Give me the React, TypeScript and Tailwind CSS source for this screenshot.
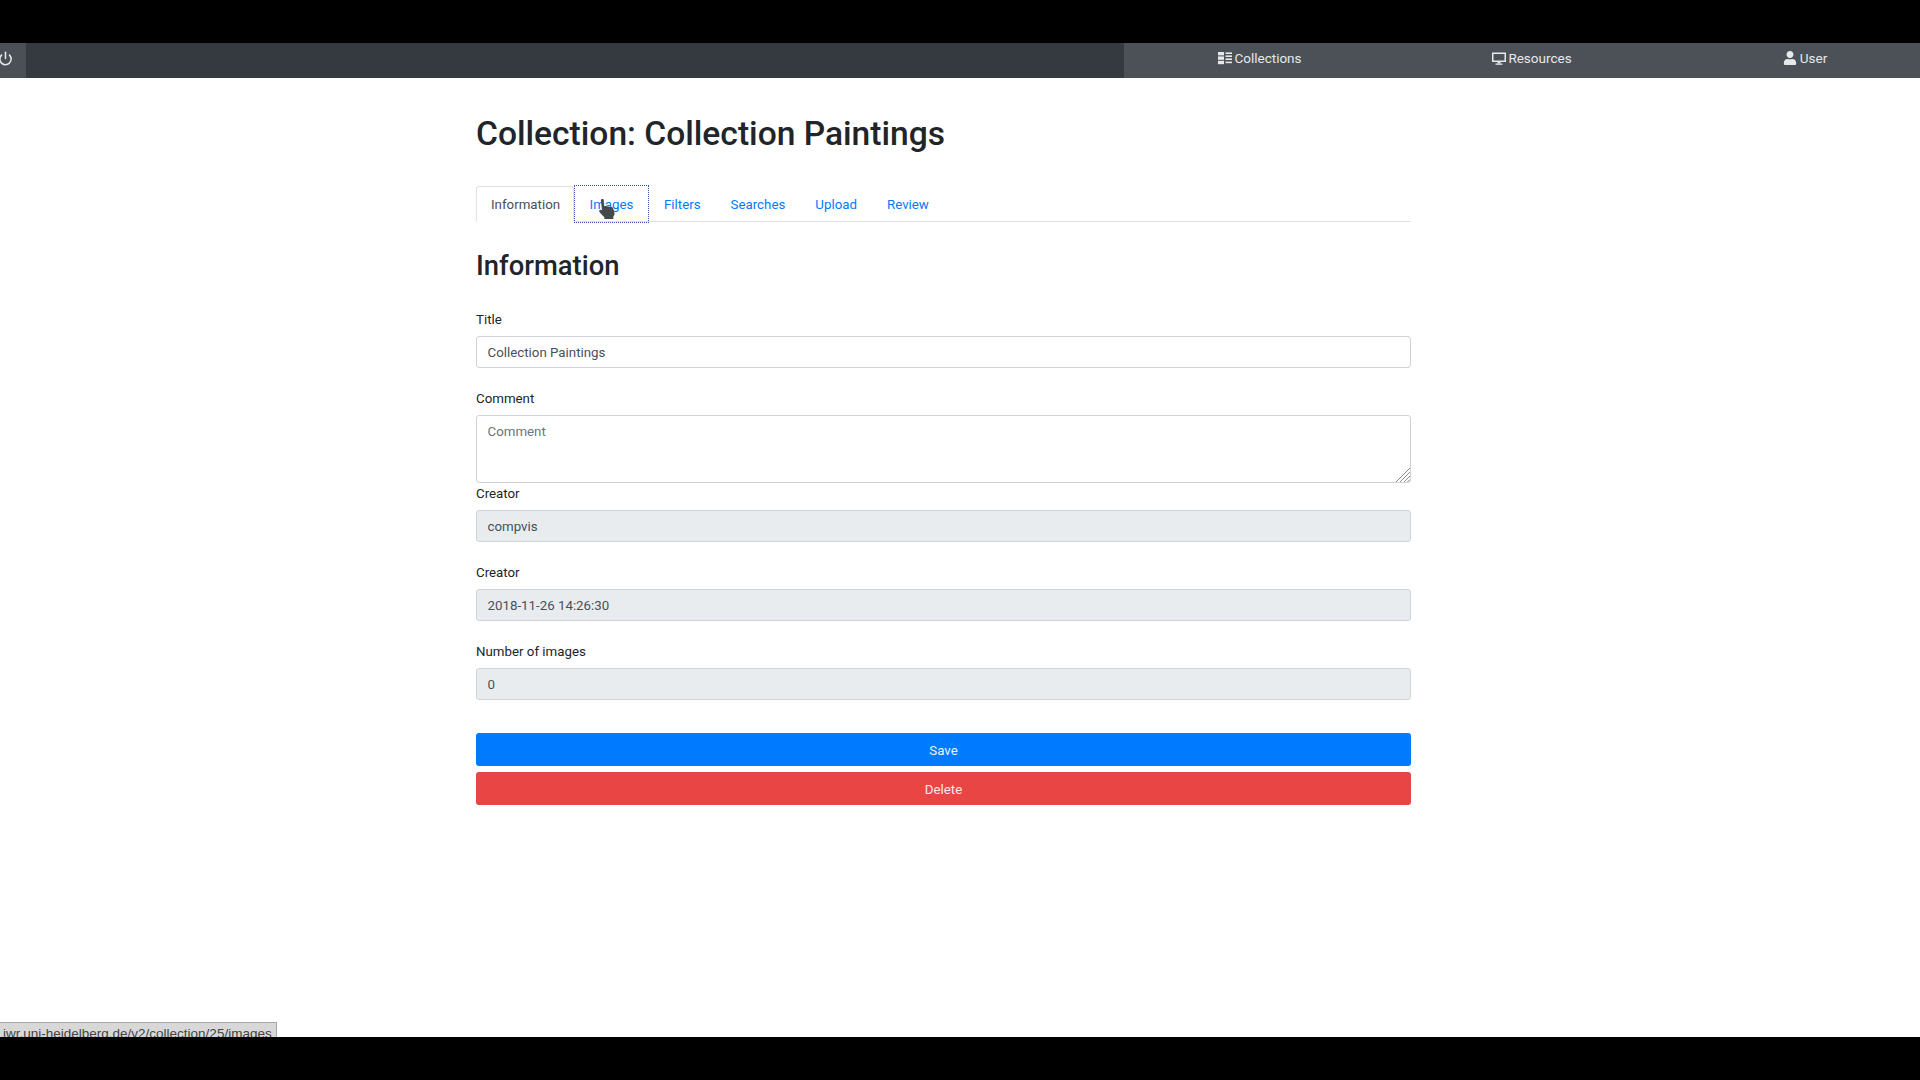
import { FaUser } from "react-icons/fa";
import { Power } from "lucide-react";

const tabs = ["Information", "Images", "Filters", "Searches", "Upload", "Review"];

function ListIcon() {
  return (
    <svg width="14" height="14" viewBox="0 0 14 14" fill="currentColor">
      <rect x="0" y="1" width="6" height="3.4" />
      <rect x="0" y="5.4" width="6" height="3.4" />
      <rect x="0" y="9.8" width="6" height="3.4" />
      <rect x="7.5" y="1.4" width="6.5" height="1.6" />
      <rect x="7.5" y="4.4" width="6.5" height="1.6" />
      <rect x="7.5" y="7.4" width="6.5" height="1.6" />
      <rect x="7.5" y="10.6" width="6.5" height="1.6" />
    </svg>
  );
}

function MonitorIcon() {
  return (
    <svg width="14" height="15" viewBox="0 0 14 14" fill="currentColor">
      <path fillRule="evenodd" d="M0 1h14v9.5H0zM1.5 2.4v6.7h11V2.4z" />
      <rect x="5.5" y="10.5" width="3" height="1.5" />
      <rect x="3.5" y="12" width="7" height="1.3" />
    </svg>
  );
}

function HandCursor() {
  return (
    <svg
      width="20"
      height="22"
      viewBox="0 0 18 24"
      preserveAspectRatio="none"
      className="absolute left-[22px] top-[12px]"
    >
      <path
        d="M3.5 2.2c0-1.5 2.6-1.5 2.6 0V9l1-.2c1-.2 1.8 0 2.2.6 1-.4 2-.2 2.5.5 1-.4 2.4 0 2.7 1.2l1.2 5c.3 1.4 0 3-1 4.2V23H6.6v-2c-1-1.4-2.4-3-4-5.2-1-1.4-.8-2.6.2-3 .6-.2 1.2 0 1.7.5z"
        fill="#45484c"
      />
    </svg>
  );
}

function ResizeGrip() {
  return (
    <svg
      width="14"
      height="14"
      viewBox="0 0 14 14"
      stroke="#8c8c8c"
      strokeWidth="1"
      className="absolute right-[1px] bottom-[1px]"
    >
      <path d="M0 14L14 0M4 14L14 4M8 14L14 8M11.5 14L14 11.5" />
    </svg>
  );
}

function Field({ label, value, disabled }: { label: string; value: string; disabled?: boolean }) {
  return (
    <div className="mb-[20px]">
      <label className="mb-[5px] block text-[13.3px] leading-[22px] text-[#212529]">{label}</label>
      <input
        readOnly
        value={value}
        className={`block h-[32px] w-full rounded-[3px] border border-[#ced4da] px-[10.5px] text-[13.3px] text-[#495057] outline-none ${
          disabled ? "bg-[#e9ecef]" : "bg-white"
        }`}
      />
    </div>
  );
}

export default function App() {
  return (
    <div className="relative flex h-screen flex-col overflow-hidden bg-white font-['Roboto',sans-serif]">
      <div className="h-[43px] shrink-0 bg-black" />

      {/* navbar */}
      <nav className="flex h-[35px] shrink-0 overflow-hidden bg-[#343a40] text-[13.5px] text-[#e6e8ea]">
        <div className="flex w-[26px] shrink-0 items-center bg-[#4a5056] pb-[5px]">
          <Power size={15} strokeWidth={2.4} className="-ml-[2px]" />
        </div>
        <div className="ml-[1098px] flex shrink-0 bg-[#4b5157]">
          <div className="flex w-[272px] items-center justify-center gap-[2px] pb-[5px]">
            <ListIcon />
            Collections
          </div>
          <div className="flex w-[272px] items-center justify-center gap-[2px] pb-[5px]">
            <MonitorIcon />
            Resources
          </div>
          <div className="flex w-[272px] items-center justify-center gap-[3px] pb-[5px] pl-[2px]">
            <FaUser size={14} />
            User
          </div>
        </div>
      </nav>

      <main className="min-h-0 flex-1">
        <div className="ml-[476px] w-[935px]">
          <h1 className="mt-[36px] text-[33.6px] leading-[40px] font-medium text-[#212529]">
            Collection: Collection Paintings
          </h1>

          <ul className="mt-[32px] flex h-[36px] border-b border-[#dee2e6] text-[13.3px]">
            {tabs.map((tab, i) => (
              <li
                key={tab}
                className={
                  i === 0
                    ? "h-[36px] rounded-t-[3px] border border-b-white border-[#dee2e6] bg-white pr-[13px] pl-[14px] leading-[36px] text-[#495057]"
                    : i === 1
                      ? "relative -mt-[1px] h-[38px] border border-dotted border-[#2a5db0] px-[14.5px] leading-[38px] text-[#007bff]"
                      : "h-[36px] px-[15px] leading-[38px] text-[#007bff]"
                }
              >
                {tab}
                {i === 1 && <HandCursor />}
              </li>
            ))}
          </ul>

          <h2 className="mt-[28px] mb-[27px] text-[27.4px] leading-[32px] font-medium text-[#212529]">
            Information
          </h2>

          <Field label="Title" value="Collection Paintings" />

          <div>
            <label className="mb-[5px] block text-[13.3px] leading-[22px] text-[#212529]">Comment</label>
            <div className="relative">
              <textarea
                readOnly
                placeholder="Comment"
                className="block h-[68px] w-full resize-none rounded-[3px] border border-[#ced4da] bg-white px-[10.5px] py-[6px] text-[13.3px] text-[#495057] outline-none placeholder:text-[#6c757d]"
              />
              <ResizeGrip />
            </div>
          </div>

          <Field label="Creator" value="compvis" disabled />
          <Field label="Creator" value="2018-11-26 14:26:30" disabled />
          <Field label="Number of images" value="0" disabled />

          <button className="mt-[33px] block h-[33px] w-full rounded-[3px] bg-[#007bff] pt-[2px] text-[13.3px] text-[#e8f2ff]">
            Save
          </button>
          <button className="mt-[6px] block h-[33px] w-full rounded-[3px] bg-[#e94545] pt-[2px] text-[13.3px] text-[#fde8e8]">
            Delete
          </button>
        </div>
      </main>

      <div className="relative h-[43px] shrink-0 bg-black">
        {/* browser status bubble, cut off by the black bar */}
        <div className="absolute bottom-full left-0 h-[15px] w-[277px] overflow-hidden border-t border-r border-[#a8a8a8] bg-[#d8d8d8] pl-[3px] font-['Liberation_Sans',sans-serif] text-[13.5px] leading-[22px] whitespace-nowrap text-[#444]">
          iwr.uni-heidelberg.de/v2/collection/25/images
        </div>
      </div>
    </div>
  );
}
